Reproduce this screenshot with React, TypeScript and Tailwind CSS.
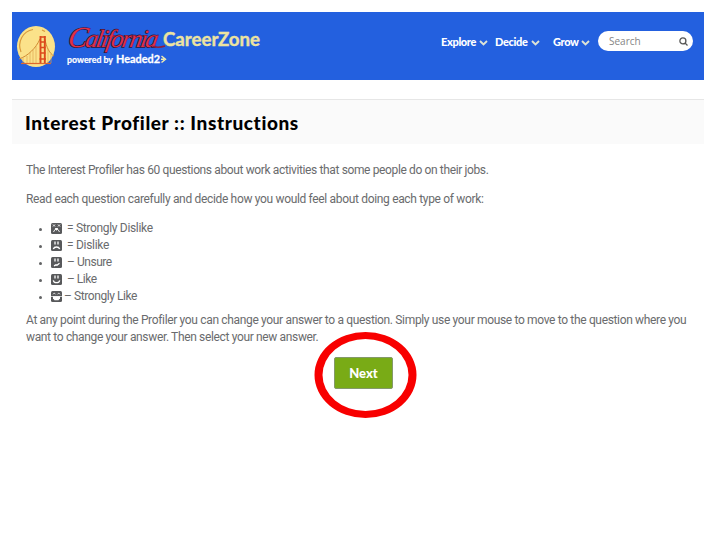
import React from "react";

type Mood = "awful" | "sad" | "unsure" | "happy" | "grin";

function BridgeLogo() {
  return (
    <svg className="h-[42px] w-[40px] shrink-0" viewBox="0 0 40 42" fill="none">
      <ellipse cx="20" cy="21.500" rx="19" ry="20.500" fill="#fbe28a" />
      <path d="M5 27C1 17 7 6 17 4.500M26 5l3 1.500" stroke="#d99a3c" strokeWidth="1.200" />
      <path d="M3 34C12 31 20 23 24 14M29 14C30 22 34 29 38 31" stroke="#d08a32" strokeWidth="1" />
      <path d="M7 33v5M11 31v8M14 28v11M17 25v14M20 21v18M32 24v15M35 29v9" stroke="#e0a850" strokeWidth=".7" />
      <path d="M24.500 11v28M28.800 11v28" stroke="#dc4a1c" strokeWidth="1.900" />
      <path d="M24 12h5.500M24 17h5.500M24 22.500h5.500M24 28h5.500M23.500 34h6.500" stroke="#dc4a1c" strokeWidth="1.600" />
      <path d="M5 38.500h30" stroke="#e0682c" strokeWidth="1.200" />
    </svg>
  );
}

function Wordmark() {
  return (
    <svg className="h-[48px] w-[200px]" viewBox="0 0 200 48">
      <g fontFamily="'Liberation Serif', serif" fontStyle="italic" transform="translate(0 25) skewX(-10)" fill="#e03048" stroke="#2c1238" strokeWidth="1.300" paintOrder="stroke">
        <text x="0" y="0" textLength="90" lengthAdjust="spacing"><tspan fontSize="29">C</tspan><tspan fontSize="25">alifornia</tspan></text>
      </g>
      <path d="M86 24.500q6 1.500 12-.5" fill="none" stroke="#8d1f3d" strokeWidth="1.500" />
      <text x="96" y="24" fontSize="19" fontFamily="Lato, sans-serif" fontWeight="700" textLength="97" lengthAdjust="spacingAndGlyphs" fill="#ece3a0" stroke="#ece3a0" strokeWidth=".4">CareerZone</text>
      <text x="0" y="41" fontSize="10" fontFamily="Lato, sans-serif" fontWeight="700" textLength="46" lengthAdjust="spacingAndGlyphs" fill="#fff" stroke="#fff" strokeWidth=".2">powered by</text>
      <text x="49" y="41" fontSize="12" fontFamily="Lato, sans-serif" fontWeight="700" textLength="44" lengthAdjust="spacingAndGlyphs" fill="#fff" stroke="#fff" strokeWidth=".3">Headed2</text>
      <path d="M94.500 34l4 3.200-4 3.300M94 37.200h3" fill="none" stroke="#f2edb0" strokeWidth="1.400" />
    </svg>
  );
}

function NavItem({ label, className }: { label: string; className: string }) {
  return (
    <a className={`flex items-center justify-between ${className}`}>
      <span>{label}</span>
      <svg className="mt-[3px] h-[6px] w-[9px]" viewBox="0 0 9 6" fill="none">
        <path d="M1 1l3.500 3.500L8 1" stroke="#dde3d6" strokeWidth="1.900" />
      </svg>
    </a>
  );
}

function Face({ mood }: { mood: Mood }) {
  return (
    <svg className="-mt-px h-[11px] w-[11px] shrink-0" viewBox="0 0 11 11" fill="none" stroke="#fff" strokeWidth="1">
      <rect width="11" height="11" rx="1.500" fill="#58595b" stroke="none" />
      {mood === "awful" && <path d="M2 1.500l2 2M4 1.500l-2 2M7 1.500l2 2M9 1.500l-2 2M4 5.500h3M2.500 9l1.500-2.500h3L8.500 9M5.500 5v2.500" strokeWidth=".9" />}
      {mood === "sad" && <path d="M4 1.500v3M7 1.500v3M2.300 9C3.300 6.300 7.700 6.300 8.700 9" strokeWidth="1.300" />}
      {mood === "unsure" && <path d="M4 1.500v3M7 1.500v3M3 8.800l2-1 1 .5 2.500-2" strokeWidth="1.300" />}
      {mood === "happy" && <path d="M4 1.500v3M7 1.500v3M2.300 6.300C3 9.500 8 9.500 8.700 6.300" strokeWidth="1.300" />}
      {mood === "grin" && (
        <>
          <path d="M2 3.300C2.500 2 4 2 4.500 3.300M6.500 3.300C7 2 8.500 2 9 3.300" strokeWidth=".8" />
          <path d="M2 5.300h7v2L7.500 9.300h-4L2 7.300z" fill="#fff" stroke="none" />
          <path d="M0 5.500h11" strokeWidth=".7" />
        </>
      )}
    </svg>
  );
}

const ratings: { mood: Mood; text: string; style: string }[] = [
  { mood: "awful", text: "= Strongly Dislike", style: "ml-[5px] tracking-[-0.32px]" },
  { mood: "sad", text: "= Dislike", style: "ml-[5px] tracking-[-0.3px]" },
  { mood: "unsure", text: "– Unsure", style: "ml-[5px] tracking-[-0.45px]" },
  { mood: "happy", text: "– Like", style: "ml-[5px] tracking-[-0.5px]" },
  { mood: "grin", text: "– Strongly Like", style: "ml-[2px] tracking-[-0.42px]" },
];

export default function App() {
  return (
    <div className="h-[540px] w-[720px] overflow-hidden bg-white px-3 pt-3 font-['Roboto',sans-serif] text-[12px] leading-[17px] text-[#6a6b6d]">
      <div className="w-[692px]">
        <header className="flex h-[68px] bg-[#2360df]">
          <div className="flex pt-[13px] pl-1">
            <BridgeLogo />
            <div className="-mt-[3px] ml-[11px]"><Wordmark /></div>
          </div>
          <nav className="mt-5 ml-auto flex h-[19px] items-center font-['Lato',sans-serif] text-[11px] font-black tracking-[-0.35px] text-white">
            <NavItem label="Explore" className="w-[47px]" />
            <NavItem label="Decide" className="ml-[7px] w-[45px]" />
            <NavItem label="Grow" className="ml-[13px] w-[37px]" />
          </nav>
          <div className="mt-[19px] mr-[11px] ml-2 flex h-5 w-[95px] items-center justify-between rounded-full bg-white pr-[5px] pl-[11px] font-['Open_Sans',sans-serif] text-[10px] text-[#858585]">
            <span>Search</span>
            <svg className="h-[9px] w-[9px]" viewBox="0 0 9 9" fill="none" stroke="#555" strokeWidth="1.300">
              <circle cx="3.900" cy="3.900" r="3" />
              <path d="M6 6l2.500 2.500" />
            </svg>
          </div>
        </header>

        <div className="mt-[19px] flex h-[45px] items-center border-t border-[#e6e6e6] bg-[#fafafa] pt-[2px] pl-[13px]">
          <h1 className="font-['Lato',sans-serif] text-[19px] leading-6 font-black tracking-[0.6px] whitespace-nowrap text-black">Interest Profiler :: Instructions</h1>
        </div>

        <main className="pt-[18px] pl-[14px] whitespace-nowrap">
          <p className="tracking-[-0.37px]">The Interest Profiler has 60 questions about work activities that some people do on their jobs.</p>
          <p className="mt-3 tracking-[-0.33px]">Read each question carefully and decide how you would feel about doing each type of work:</p>
          <ul className="mt-3 pl-[13px]">
            {ratings.map((r) => (
              <li key={r.mood} className="flex h-[17px] items-center">
                <span className="mt-[2px] mr-[9px] h-[3px] w-[3px] rounded-full bg-[#626365]" />
                <Face mood={r.mood} />
                <span className={r.style}>{r.text}</span>
              </li>
            ))}
          </ul>
          <p className="mt-[7px]">
            <span className="tracking-[-0.34px]">At any point during the Profiler you can change your answer to a question. Simply use your mouse to move to the question where you</span><br />
            <span className="tracking-[-0.35px]">want to change your answer. Then select your new answer.</span>
          </p>
          <div className="relative mt-[11px] ml-[308px] h-8 w-[59px]">
            <button className="h-8 w-[59px] rounded-[2px] border border-[#84996a] bg-[#79ab16] font-['Lato',sans-serif] text-[13px] font-black text-white">Next</button>
            <svg className="pointer-events-none absolute -top-[25px] -left-[20px] h-[86px] w-[103px]" viewBox="0 0 103 86" fill="none">
              <path fillRule="evenodd" fill="#f80000" d="M.5 43a51 43 0 1 0 102 0a51 43 0 1 0-102 0zM8.500 43a43 36 0 1 1 86 0a43 36 0 1 1-86 0z" />
            </svg>
          </div>
        </main>
      </div>
    </div>
  );
}
